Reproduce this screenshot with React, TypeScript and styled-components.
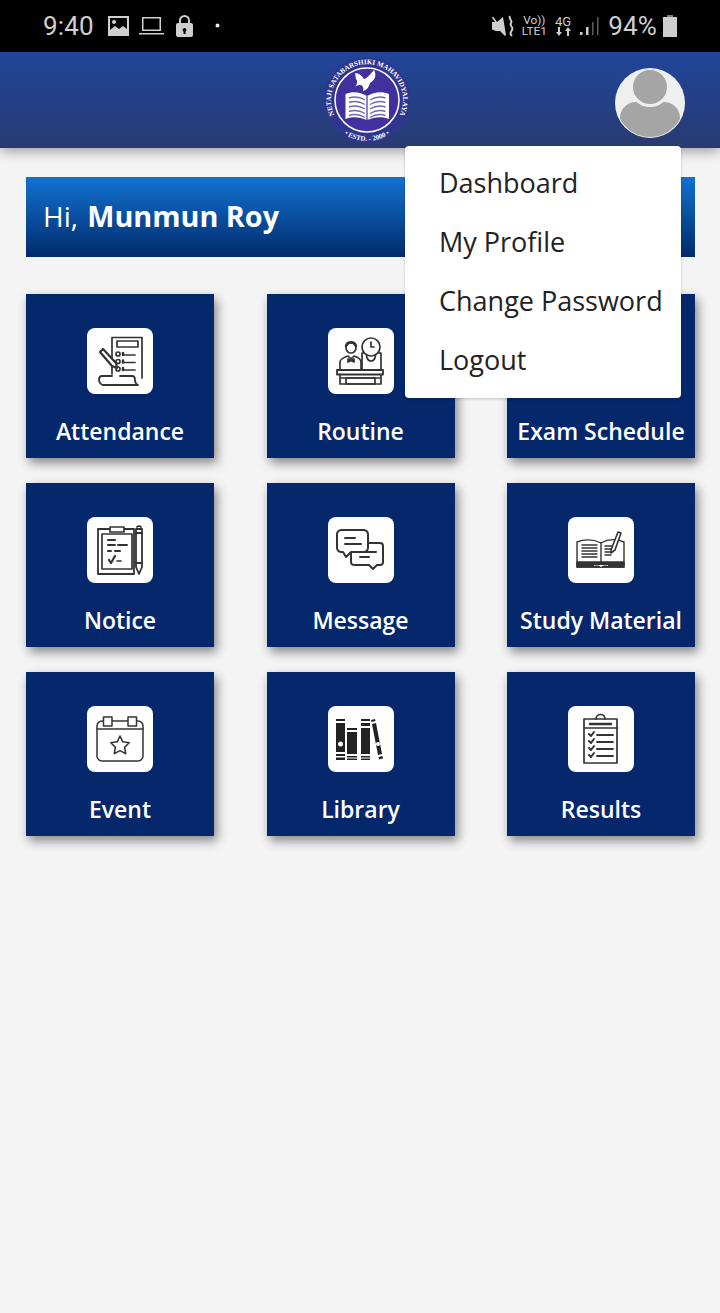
import React from "react";
import styled, { createGlobalStyle } from "styled-components";

const Global = createGlobalStyle`
  html, body { margin: 0; padding: 0; background: #f4f4f4; }
  * { box-sizing: border-box; }
`;

const Page = styled.div`
  position: relative;
  width: 720px;
  height: 1313px;
  overflow: hidden;
  background: #f4f4f4;
  font-family: "Open Sans", "Liberation Sans", sans-serif;
`;

const StatusBar = styled.div`
  height: 52px;
  background: #000;
  display: flex;
  align-items: center;
  justify-content: space-between;
  padding: 0 43px;
  color: #cfcfcf;
  font-family: Roboto, "Liberation Sans", sans-serif;
`;

const StatusGroup = styled.div`
  display: flex;
  align-items: center;
`;

const StatusText = styled.span<{ $mr: number }>`
  font-size: 26px;
  line-height: 30px;
  letter-spacing: 0.2px;
  margin-right: ${(p) => p.$mr}px;
`;

const TinyStack = styled.div<{ $size: number; $mr: number }>`
  display: flex;
  flex-direction: column;
  align-items: center;
  font-size: ${(p) => p.$size}px;
  line-height: 11px;
  font-weight: 400;
  color: #cfcfcf;
  margin-right: ${(p) => p.$mr}px;
`;

const StatusIcon = styled.svg<{ $mr?: number; $mb?: number }>`
  display: block;
  fill: #cfcfcf;
  margin-right: ${(p) => p.$mr ?? 0}px;
  margin-bottom: ${(p) => p.$mb ?? 0}px;
`;

const Header = styled.header`
  height: 96px;
  background: linear-gradient(180deg, #20459b 0%, #283b70 100%);
  box-shadow: 0 3px 12px rgba(0, 0, 0, 0.38);
  display: flex;
  align-items: center;
  justify-content: center;
  padding-top: 2px;
  position: relative;
`;

const Logo = styled.svg`
  width: 88px;
  height: 88px;
  margin-left: 13px;
  margin-top: -3px;
`;

const Avatar = styled.svg`
  position: absolute;
  left: 615px;
  top: 16px;
  width: 70px;
  height: 70px;
`;

const Content = styled.main`
  padding: 29px 25px 0 26px;
`;

const Greeting = styled.div`
  height: 80px;
  padding: 0 17px 3px;
  display: flex;
  align-items: center;
  color: #fff;
  font-size: 28px;
  background: linear-gradient(180deg, #1272d0 0%, #002b6d 100%);
  white-space: pre;
`;

const GreetingName = styled.b`
  font-weight: 700;
  font-size: 28.8px;
  margin-left: 2px;
`;

const Grid = styled.div`
  margin-top: 37px;
  display: grid;
  grid-template-columns: repeat(3, 188px);
  column-gap: 52.5px;
  row-gap: 25px;
`;

const Card = styled.div`
  height: 164px;
  background: #05276b;
  box-shadow: 3px 5px 10px rgba(0, 0, 0, 0.45);
  display: flex;
  flex-direction: column;
  align-items: center;
  padding-top: 34px;
`;

const Tile = styled.div`
  width: 66px;
  height: 66px;
  background: #fff;
  border-radius: 8px;
  display: flex;
  align-items: center;
  justify-content: center;
`;

const TileIcon = styled.svg<{ $sw?: number }>`
  width: 66px;
  height: 66px;
  fill: none;
  stroke: #333;
  stroke-width: ${(p) => p.$sw ?? 1.7};
  stroke-linejoin: round;
  stroke-linecap: round;
`;

const SolidIcon = styled.svg`
  width: 66px;
  height: 66px;
  fill: #222;
  stroke: none;
`;

const Label = styled.div`
  margin-top: 21px;
  color: #fff;
  font-size: 23px;
  line-height: 32px;
  font-weight: 600;
  white-space: nowrap;
`;

const Menu = styled.nav`
  position: absolute;
  left: 405px;
  top: 146px;
  width: 276px;
  height: 252px;
  background: #fff;
  border-radius: 4px;
  padding: 7px 0 0 34px;
  box-shadow: 0 1px 3px rgba(0, 0, 0, 0.2);
`;

const MenuItem = styled.div`
  height: 59px;
  display: flex;
  align-items: center;
  color: #222;
  font-size: 27px;
  white-space: nowrap;
`;

const AttendanceIcon = () => (
  <TileIcon viewBox="0 0 66 66">
    <path d="M25 46V9.500h30V50" />
    <rect x="30" y="13" width="21" height="6" />
    <circle cx="31" cy="26" r="2" /><circle cx="31" cy="33.500" r="2" /><circle cx="31" cy="41" r="2" />
    <path d="M36 27h12M36 34.500h12M36 42h12" />
    <path d="M36 25v2M36 32.500v2M36 40v2" strokeWidth="2.500" />
    <path d="M13 24l3-3 13 14 1 5-5-2z" strokeWidth="2.200" fill="#fff" />
    <path d="M25 48H15c-2 0-3 2-3 4s2 5 4 5h35c-2-1-3-3-3-5s-1-4-3-4H33" strokeWidth="1.800" />
  </TileIcon>
);

const RoutineIcon = () => (
  <TileIcon viewBox="0 0 66 66">
    <path d="M34 42V25h5c-1 3 0 8 4 8s5-5 4-8h6v17" />
    <circle cx="43" cy="19" r="9" fill="#fff" />
    <path d="M43 14v5h3" />
    <circle cx="23" cy="20" r="5" />
    <path d="M18 18c1-5 9-5 10 0" strokeWidth="2.500" />
    <path d="M12 43v-9c0-3 5-5 8-6l3 3 3-3c3 1 7 3 7 6v9" />
    <path d="M20 31l3 1.500 3-1.500v3l-3-1.500-3 1.500z" fill="#333" />
    <rect x="9" y="42" width="46" height="4.500" strokeWidth="1.800" fill="#fff" />
    <path d="M12 46.500V56M53 46.500V56M12 56h41M12 50h41" />
    <rect x="18" y="50" width="29" height="6" />
  </TileIcon>
);

const NoticeIcon = () => (
  <TileIcon viewBox="0 0 66 66">
    <path d="M11 12h36v45H11z" strokeWidth="1.800" />
    <path d="M15 17h30v35H15z" />
    <rect x="23" y="10" width="14" height="5" fill="#fff" />
    <path d="M21 23h7M21 28h7M31 28h9M21 34h3M28 34h5" strokeWidth="2" />
    <path d="M22 43l2 3 4-7" strokeWidth="2.200" />
    <path d="M30 44h4" strokeWidth="1.700" />
    <path d="M49 12h6v38l-3 7-3-7z" strokeWidth="1.800" fill="#fff" />
    <path d="M49 16h6M49 46h6M50 10c0-1 4-1 4 0" strokeWidth="1.800" />
  </TileIcon>
);

const MessageIcon = () => (
  <TileIcon viewBox="0 0 66 66" $sw={2}>
    <path d="M13 13h23c2 0 4 2 4 4v14c0 2-2 4-4 4H23l-5 5-3-5h-2c-2 0-4-2-4-4V17c0-2 2-4 4-4z" />
    <path d="M17 21h10M17 27h16" />
    <path d="M40 26h12c2 0 3 1 3 3v16c0 2-1 3-3 3h-3l-4 4-4-4H27c-2 0-4-1-4-3v-9" />
    <path d="M32 35h16M32 40h9" />
  </TileIcon>
);

const StudyIcon = () => (
  <TileIcon viewBox="0 0 66 66" $sw={1.4}>
    <path d="M9 25c7-3 17-3 24 1 7-4 16-4 23-1v25H9z" />
    <path d="M33 26v20" />
    <path d="M14 28h15M14 31h15M14 34h15M14 37h15M14 40h15" />
    <path d="M37 29h9M37 32h8M37 35h7M37 38h6" />
    <path d="M43 33l7-18 3 1-6 17-4 3z" fill="#fff" strokeWidth="1.600" />
    <path d="M9 45h47v5H9z" fill="#333" />
    <path d="M26 49c3-1 6 0 7 1 1-1 4-2 7-1v-1H26z" fill="#fff" stroke="none" />
  </TileIcon>
);

const EventIcon = () => (
  <TileIcon viewBox="0 0 66 66" $sw={1.5}>
    <rect x="10" y="15" width="46" height="40" rx="5" />
    <path d="M10 23h46" />
    <rect x="16.500" y="11" width="8.500" height="9" fill="#fff" />
    <rect x="41" y="11" width="8.500" height="9" fill="#fff" />
    <path d="M33 30l2.800 5.800 6.400.9-4.600 4.500 1.100 6.400-5.700-3-5.700 3 1.100-6.400-4.600-4.500 6.400-.9z" strokeWidth="1.600" />
  </TileIcon>
);

const LibraryIcon = () => (
  <SolidIcon viewBox="0 0 66 66">
    <path d="M8 13h9v2H8zM8 17h9v29H8zM8 48h9v2H8zM8 51.500h9V54H8z" />
    <circle cx="12.500" cy="38" r="2.500" fill="#fff" />
    <path d="M19 22h10v2H19zM19 26h10v22H19zM19 50h10v1.500H19zM19 52.500h10V54H19z" />
    <path d="M33 13h9v2h-9zM33 17h9v3h-9zM33 22h9v26h-9zM33 50h9v1.500h-9zM33 52.500h9V54h-9z" />
    <path d="M43 14l4-1 .5 2-4 1zM44 18l4-1 6 31-4 1zM50.500 51l4-1 .5 2.500-4 1z" />
    <circle cx="50" cy="38" r="2" fill="#fff" />
  </SolidIcon>
);

const ResultsIcon = () => (
  <TileIcon viewBox="0 0 66 66">
    <rect x="16" y="13" width="33" height="44" />
    <path d="M22 18h21" strokeWidth="2.500" />
    <path d="M28 13c0-6 9-6 9 0" />
    <path d="M16 22h33" />
    <path d="M21 28l2 2 3-4M21 35l2 2 3-4M21 42l2 2 3-4M21 49l2 2 3-4" strokeWidth="2" />
    <path d="M29 29h16M29 36h16M29 43h16M29 50h16" strokeWidth="1.800" />
  </TileIcon>
);

const cards: { label: string; icon: React.ReactNode }[] = [
  { label: "Attendance", icon: <AttendanceIcon /> },
  { label: "Routine", icon: <RoutineIcon /> },
  { label: "Exam Schedule", icon: <ResultsIcon /> },
  { label: "Notice", icon: <NoticeIcon /> },
  { label: "Message", icon: <MessageIcon /> },
  { label: "Study Material", icon: <StudyIcon /> },
  { label: "Event", icon: <EventIcon /> },
  { label: "Library", icon: <LibraryIcon /> },
  { label: "Results", icon: <ResultsIcon /> },
];

const menu = ["Dashboard", "My Profile", "Change Password", "Logout"];

export default function App() {
  return (
    <Page>
      <Global />
      <StatusBar>
        <StatusGroup>
          <StatusText $mr={14}>9:40</StatusText>
          <StatusIcon width="21" height="20" viewBox="0 0 21 20" $mr={10}>
            <path fillRule="evenodd" d="M0 0h21v20H0zM2 2v12l5-4 4 3 4-3 4 3V2zM6 4a2 2 0 1 1-.01 0z" />
          </StatusIcon>
          <StatusIcon width="25" height="20" viewBox="0 0 25 20" $mr={12}>
            <path fillRule="evenodd" d="M3 1h19v14H3zM4.500 2.500v11h16v-11zM0 17h25v1.600H0z" />
          </StatusIcon>
          <StatusIcon width="17" height="22" viewBox="0 0 17 22" $mr={22}>
            <path fillRule="evenodd" d="M2 8h1V5.500a5.500 5.500 0 0 1 11 0V8h1a2 2 0 0 1 2 2v10a2 2 0 0 1-2 2H2a2 2 0 0 1-2-2V10a2 2 0 0 1 2-2zM5 8h7V5.500a3.500 3.500 0 0 0-7 0zM8.500 13a2 2 0 0 0-1 3.700V19h2v-2.300a2 2 0 0 0-1-3.700z" />
          </StatusIcon>
          <StatusIcon width="5" height="5" viewBox="0 0 5 5" $mb={2}>
            <circle cx="2.500" cy="2.500" r="2" fill="#e8e8e8" />
          </StatusIcon>
        </StatusGroup>
        <StatusGroup>
          <StatusIcon width="23" height="22" viewBox="0 0 23 22" $mr={7}>
            <path d="M0 7h5L11 2l3 18-1 1-5-5H4L0 14.500zM1 1.500L14 19l-1 1L0 3z" />
            <path d="M18 1c-2 3 3 4 1 7s3 4 1 7-2 4 0 6" fill="none" stroke="#cfcfcf" strokeWidth="2" />
          </StatusIcon>
          <TinyStack $size={11.8} $mr={8}><span>Vo))</span><span>LTE1</span></TinyStack>
          <TinyStack $size={13} $mr={9}>
            <span>4G</span>
            <StatusIcon width="15" height="9" viewBox="0 0 15 9">
              <path d="M3 9L0 5h2V0h2v5h2zM12 0l3 4h-2v5h-2V4H9z" />
            </StatusIcon>
          </TinyStack>
          <StatusIcon width="19" height="19" viewBox="0 0 19 19" $mr={9}>
            <path d="M0 15h2.500v3H0zM6 10h2.500v8H6z" />
            <path d="M12 5h1.500v13H12zM17 0h1.500v18H17z" opacity=".45" />
          </StatusIcon>
          <StatusText $mr={6}>94%</StatusText>
          <StatusIcon width="14" height="22" viewBox="0 0 14 22">
            <path d="M4 0h6v2H4z" opacity=".6" />
            <path d="M0 2h14v20H0z" />
            <path d="M0 2h14v3H0z" opacity=".6" />
          </StatusIcon>
        </StatusGroup>
      </StatusBar>
      <Header>
        <Logo viewBox="0 0 88 88">
          <defs>
            <path id="logoTop" d="M18.500 69.500A36 36 0 1 1 69.500 69.500" />
            <path id="logoBottom" d="M15 73A41 41 0 0 0 73 73" />
          </defs>
          <circle cx="44" cy="44" r="43" fill="#2f3690" />
          <circle cx="44" cy="44" r="32" fill="#42309d" stroke="#fff" strokeWidth="1.500" />
          <text fontFamily="'Liberation Serif', serif" fontSize="7" fontWeight="700" fill="#fff">
            <textPath href="#logoTop" startOffset="50%" textAnchor="middle">NETAJI SATABARSHIKI MAHAVIDYALAYA</textPath>
          </text>
          <text fontFamily="'Liberation Serif', serif" fontSize="7" fontWeight="700" fill="#fff">
            <textPath href="#logoBottom" startOffset="50%" textAnchor="middle">• ESTD. - 2000 •</textPath>
          </text>
          <path d="M32 17c4 0 7 3 9 6 4-1 7-6 10-9 3 5 1 10-4 13-1 4-3 7-7 8 1-3 0-5-2-6-2 0-4 0-6 2 2-3 3-5 1-8z" fill="#fff" />
          <path d="M22.500 38c7-3 15-2 21.500 2 7-4 15-5 22-2v25c-7-3-15-2-22 1-7-3-15-4-21.500-1z" fill="#fff" />
          <path d="M26 42c6-2 11-1 16 2M26 46.500c6-2 11-1 16 2M26 51c6-2 11-1 16 2M26 55.500c6-2 11-1 16 2M26 59.500c6-2 11-1 16 2M47 44c5-3 10-4 15.500-2M47 48.500c5-3 10-4 15.500-2M47 53c5-3 10-4 15.500-2M47 57.500c5-3 10-4 15.500-2M47 61.500c5-3 10-4 15.500-2" fill="none" stroke="#6f6ab5" strokeWidth="1.400" />
          <path d="M44 40v24" stroke="#42309d" strokeWidth="1.200" />
        </Logo>
        <Avatar viewBox="0 0 70 70">
          <circle cx="35" cy="35" r="35" fill="#efefef" />
          <clipPath id="avatarClip"><circle cx="35" cy="35" r="34" /></clipPath>
          <g clipPath="url(#avatarClip)" fill="#a5a5a5">
            <path d="M5 70V50c0-9 7-16 16-16h28c9 0 16 7 16 16v20z" />
            <circle cx="35" cy="19" r="18.500" stroke="#efefef" strokeWidth="3" />
          </g>
        </Avatar>
      </Header>
      <Content>
        <Greeting>
          <span>Hi, <GreetingName>Munmun Roy</GreetingName></span>
        </Greeting>
        <Grid>
          {cards.map((c) => (
            <Card key={c.label}>
              <Tile>{c.icon}</Tile>
              <Label>{c.label}</Label>
            </Card>
          ))}
        </Grid>
      </Content>
      <Menu>
        {menu.map((m) => (
          <MenuItem key={m}>{m}</MenuItem>
        ))}
      </Menu>
    </Page>
  );
}
